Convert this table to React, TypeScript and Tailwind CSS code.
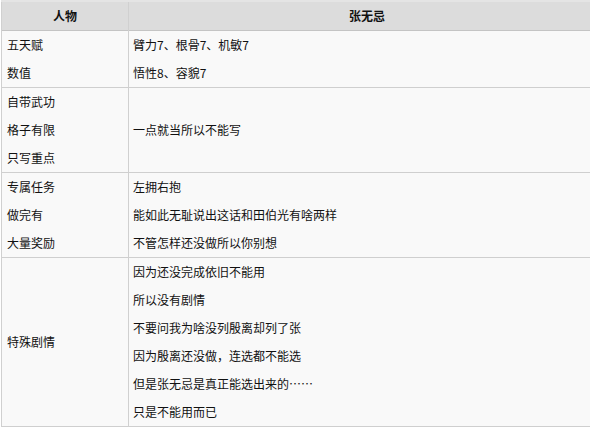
import React from "react";

interface Row {
  left: string[];
  right: string[];
  leftMiddle?: boolean;
  rightMiddle?: boolean;
}

const rows: Row[] = [
  { left: ["五天赋", "数值"], right: ["臂力7、根骨7、机敏7", "悟性8、容貌7"] },
  {
    left: ["自带武功", "格子有限", "只写重点"],
    right: ["一点就当所以不能写"],
    rightMiddle: true,
  },
  {
    left: ["专属任务", "做完有", "大量奖励"],
    right: ["左拥右抱", "能如此无耻说出这话和田伯光有啥两样", "不管怎样还没做所以你别想"],
  },
  {
    left: ["特殊剧情"],
    leftMiddle: true,
    right: [
      "因为还没完成依旧不能用",
      "所以没有剧情",
      "不要问我为啥没列殷离却列了张",
      "因为殷离还没做，连选都不能选",
      "但是张无忌是真正能选出来的……",
      "只是不能用而已",
    ],
  },
];

export default function App() {
  return (
    <div
      className="w-[590px] h-[427px] overflow-hidden bg-white text-[12px] text-[#111]"
      style={{ fontFamily: '"Noto Sans CJK SC", "Noto Sans", sans-serif' }}
    >
      <table className="w-[604px] ml-px border-collapse table-fixed">
        <thead>
          <tr className="bg-[#dcdcdc] h-[29px] border-t-2 border-t-[#e4e4e4] border-b border-b-[#c4c4c4]">
            <th className="w-[127px] font-bold text-center border-l border-l-[#d0d0d0] border-r border-r-[#d0d0d0]">
              人物
            </th>
            <th className="font-bold text-center">张无忌</th>
          </tr>
        </thead>
        <tbody className="bg-[#f9f9f9]">
          {rows.map((row, i) => (
            <tr key={i} className="border-b border-b-[#cfcfcf]">
              <td
                className={`pl-[5px] leading-[28px] border-l border-l-[#d0d0d0] border-r border-r-[#d0d0d0] ${
                  row.leftMiddle ? "align-middle" : "align-top"
                }`}
              >
                {row.left.map((t, j) => (
                  <div key={j}>{t}</div>
                ))}
              </td>
              <td
                className={`pl-[4px] leading-[28px] ${
                  row.rightMiddle ? "align-middle" : "align-top"
                }`}
              >
                {row.right.map((t, j) => (
                  <div key={j}>{t}</div>
                ))}
              </td>
            </tr>
          ))}
        </tbody>
      </table>
    </div>
  );
}
